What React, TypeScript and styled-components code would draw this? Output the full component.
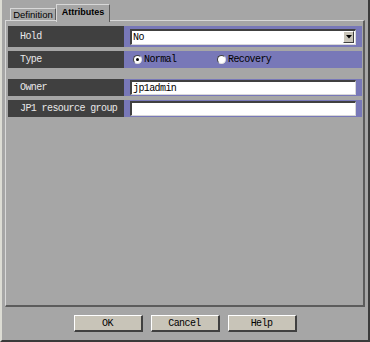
import React from "react";
import styled, { createGlobalStyle } from "styled-components";

const Global = createGlobalStyle`
  html, body { margin: 0; padding: 0; background: #a6a6a6; }
  * { box-sizing: border-box; }
`;

const mono = `"Liberation Mono", "Courier New", monospace`;

const Window = styled.div`
  width: 370px;
  height: 342px;
  background: #a6a6a6;
  border-left: 2px solid #dcdcd4;
  border-right: 2px solid #3c3c3c;
  border-bottom: 2px solid #3a3a3a;
  display: flex;
  flex-direction: column;
`;

const TabBar = styled.div`
  height: 20px;
  display: flex;
  align-items: flex-end;
  padding-left: 8px;
`;

const Tab = styled.div<{ $active?: boolean; $w: number }>`
  position: relative;
  z-index: ${(p) => (p.$active ? 2 : 1)};
  width: ${(p) => p.$w}px;
  height: ${(p) => (p.$active ? "18px" : "12px")};
  margin-bottom: ${(p) => (p.$active ? "-2px" : "0")};
  padding-top: ${(p) => (p.$active ? "1px" : "0")};
  background: #a6a6a6;
  border-top: 1px solid #d8d8d8;
  border-left: 1px solid #d8d8d8;
  border-right: 1px solid #5c5c5c;
  font-family: "Liberation Sans", Arial, sans-serif;
  font-size: ${(p) => (p.$active ? "9px" : "9.5px")};
  font-weight: ${(p) => (p.$active ? 700 : 400)};
  color: #000;
  line-height: 12px;
  text-align: center;
  white-space: nowrap;
`;

const Panel = styled.div`
  margin: 0 3px 0 3px;
  height: 287px;
  border-top: 1px solid #d8d8d8;
  border-left: 1px solid #d8d8d8;
  border-right: 2px solid #5c5c5c;
  border-bottom: 2px solid #5c5c5c;
  padding: 5px 1px 0 2px;
  display: flex;
  flex-direction: column;
`;

const Row = styled.div<{ $h: number; $mt: number }>`
  display: grid;
  grid-template-columns: 116px 1fr;
  height: ${(p) => p.$h}px;
  margin-top: ${(p) => p.$mt}px;
`;

const Label = styled.div`
  background: #404040;
  color: #e8e8e8;
  font-family: ${mono};
  font-size: 10px;
  letter-spacing: -0.6px;
  display: flex;
  align-items: center;
  padding-left: 12px;
`;

const Field = styled.div`
  background: #7878b8;
  display: flex;
  align-items: center;
  padding: 0 6px 0 6px;
`;

const Sunken = styled.div<{ $h: number }>`
  flex: 1;
  height: ${(p) => p.$h}px;
  background: #fff;
  border-top: 2px solid #404040;
  border-left: 2px solid #404040;
  border-right: 1px solid #d8d8d8;
  border-bottom: 1px solid #d8d8d8;
  display: flex;
  align-items: center;
  padding-left: 1px;
  font-family: ${mono};
  font-size: 10px;
  letter-spacing: -0.6px;
  color: #000;
`;

const SelectText = styled.span`
  flex: 1;
`;

const DropButton = styled.div`
  width: 11px;
  height: 12px;
  margin-right: 1px;
  background: #c8c4b8;
  border-top: 1px solid #fff;
  border-left: 1px solid #fff;
  border-right: 1px solid #404040;
  border-bottom: 1px solid #404040;
  display: flex;
  align-items: center;
  justify-content: center;
`;

const RadioGroup = styled.label`
  display: flex;
  align-items: center;
  gap: 2px;
  font-family: ${mono};
  font-size: 10px;
  letter-spacing: -0.6px;
  color: #000;
  width: 84px;
  padding-left: 3px;
`;

const RadioCircle = styled.span<{ $on?: boolean }>`
  width: 9px;
  height: 9px;
  border-radius: 50%;
  background: #fff;
  border-top: 1px solid #404040;
  border-left: 1px solid #404040;
  border-right: 1px solid #e0e0e0;
  border-bottom: 1px solid #e0e0e0;
  display: flex;
  align-items: center;
  justify-content: center;
  &::after {
    content: "";
    width: 3px;
    height: 3px;
    border-radius: 50%;
    background: ${(p) => (p.$on ? "#000" : "transparent")};
  }
`;

const ButtonBar = styled.div`
  display: flex;
  justify-content: center;
  gap: 8px;
  margin-top: 8px;
`;

const Button = styled.div`
  width: 69px;
  height: 17px;
  background: #c8c4b8;
  border-top: 1px solid #fff;
  border-left: 1px solid #fff;
  border-right: 2px solid #404040;
  border-bottom: 2px solid #404040;
  display: flex;
  align-items: center;
  justify-content: center;
  font-family: ${mono};
  font-size: 10px;
  letter-spacing: -0.6px;
  color: #000;
`;

export default function App() {
  return (
    <>
      <Global />
      <Window>
        <TabBar>
          <Tab $w={46}>Definition</Tab>
          <Tab $active $w={54}>Attributes</Tab>
        </TabBar>
        <Panel>
          <Row $h={21} $mt={0}>
            <Label>Hold</Label>
            <Field>
              <Sunken $h={16}>
                <SelectText>No</SelectText>
                <DropButton>
                  <svg width="6" height="4" viewBox="0 0 6 4">
                    <path d="M0 0H6L3 3.5Z" fill="#000" />
                  </svg>
                </DropButton>
              </Sunken>
            </Field>
          </Row>
          <Row $h={17} $mt={4}>
            <Label>Type</Label>
            <Field>
              <RadioGroup>
                <RadioCircle $on />
                Normal
              </RadioGroup>
              <RadioGroup>
                <RadioCircle />
                Recovery
              </RadioGroup>
            </Field>
          </Row>
          <Row $h={17} $mt={11}>
            <Label>Owner</Label>
            <Field>
              <Sunken $h={15}>jp1admin</Sunken>
            </Field>
          </Row>
          <Row $h={17} $mt={4}>
            <Label>JP1 resource group</Label>
            <Field>
              <Sunken $h={15} />
            </Field>
          </Row>
        </Panel>
        <ButtonBar>
          <Button>OK</Button>
          <Button>Cancel</Button>
          <Button>Help</Button>
        </ButtonBar>
      </Window>
    </>
  );
}
